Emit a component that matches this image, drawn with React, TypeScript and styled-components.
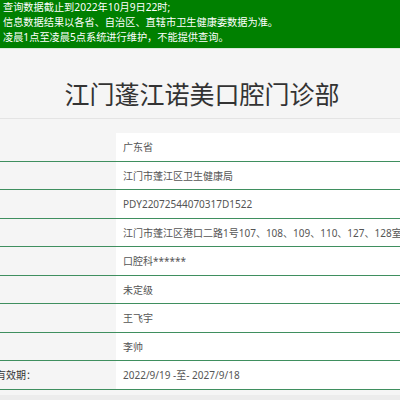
import React from "react";
import styled, { createGlobalStyle } from "styled-components";

const Global = createGlobalStyle`
  html, body { margin: 0; padding: 0; }
  body {
    background: #f5f5f5;
    font-family: "Noto Sans", "Noto Sans CJK SC", sans-serif;
    overflow: hidden;
    width: 400px;
    height: 400px;
  }
`;

const Page = styled.div`
  display: flex;
  flex-direction: column;
  width: 400px;
  height: 400px;
  overflow: hidden;
`;

const Notice = styled.div`
  background: #008000;
  color: #ffffff;
  font-size: 10.2px;
  line-height: 15px;
  padding: 0 3px 4px;
  height: 49px;
  box-sizing: border-box;
  border-bottom: 1px solid #d9ead9;
`;

const TitleBar = styled.div`
  height: 70px;
  box-sizing: border-box;
  display: flex;
  align-items: center;
  justify-content: center;
  padding: 18px 0 0 4px;
  border-bottom: 1px solid #e4e4e4;
`;

const Title = styled.h1`
  margin: 0;
  font-size: 25px;
  font-weight: 400;
  color: #333333;
  line-height: 30px;
  font-family: "Noto Sans CJK SC", sans-serif;
`;

const Table = styled.div`
  margin: 14px 0 0 -62px;
  width: 462px;
  display: flex;
  flex-direction: column;
`;

const Row = styled.div`
  display: grid;
  grid-template-columns: 178px 1fr;
  height: 28.5px;
  box-sizing: border-box;
  border-bottom: 1px solid #3f8f5f;
`;

const Label = styled.div`
  display: flex;
  align-items: center;
  padding-left: 8px;
  font-size: 10px;
  color: #333333;
  white-space: nowrap;
`;

const Value = styled.div`
  display: flex;
  align-items: center;
  background: #ffffff;
  padding-left: 7px;
  font-size: 10px;
  color: #555555;
  white-space: nowrap;
  overflow: hidden;
`;

const Footer = styled.div`
  margin-top: 5px;
  flex: 1;
  background: #ececec;
`;

const rows: [string, string][] = [
  ["", "广东省"],
  ["", "江门市蓬江区卫生健康局"],
  ["", "PDY22072544070317D1522"],
  ["", "江门市蓬江区港口二路1号107、108、109、110、127、128室"],
  ["", "口腔科******"],
  ["", "未定级"],
  ["", "王飞宇"],
  ["", "李帅"],
  ["执业许可证有效期：", "2022/9/19 -至- 2027/9/18"],
];

export default function App() {
  return (
    <>
      <Global />
      <Page>
        <Notice>
          <div>查询数据截止到2022年10月9日22时;</div>
          <div>信息数据结果以各省、自治区、直辖市卫生健康委数据为准。</div>
          <div>凌晨1点至凌晨5点系统进行维护，不能提供查询。</div>
        </Notice>
        <TitleBar>
          <Title>江门蓬江诺美口腔门诊部</Title>
        </TitleBar>
        <Table>
          {rows.map(([l, v], i) => (
            <Row key={i}>
              <Label>{l}</Label>
              <Value>{v}</Value>
            </Row>
          ))}
        </Table>
        <Footer />
      </Page>
    </>
  );
}
